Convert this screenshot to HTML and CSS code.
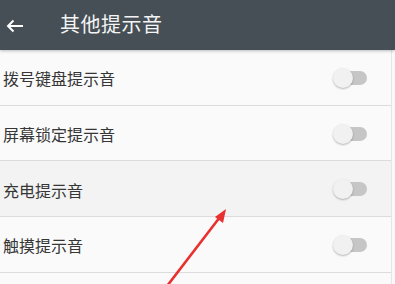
FILE: index.html
```html
<!DOCTYPE html>
<html lang="zh">
<head>
<meta charset="utf-8">
<link rel="stylesheet" href="styles.css">
</head>
<body>
<div class="screen">
  <header class="toolbar">
    <svg class="back" width="18" height="14" viewBox="0 0 18 14"><path d="M17 7H2M7.5 1.5L2 7l5.5 5.5" fill="none" stroke="#fff" stroke-width="2"/></svg>
    <span class="title">其他提示音</span>
  </header>
  <ul class="list">
    <li class="row"><span class="label">拨号键盘提示音</span><span class="switch"><span class="track"></span><span class="knob"></span></span></li>
    <li class="row"><span class="label">屏幕锁定提示音</span><span class="switch"><span class="track"></span><span class="knob"></span></span></li>
    <li class="row pressed"><span class="label">充电提示音</span><span class="switch"><span class="track"></span><span class="knob"></span></span></li>
    <li class="row"><span class="label">触摸提示音</span><span class="switch"><span class="track"></span><span class="knob"></span></span></li>
    <li class="row"></li>
  </ul>
  <svg class="arrow" width="395" height="284" viewBox="0 0 395 284">
    <line x1="164" y1="290" x2="220" y2="217" stroke="#e8302e" stroke-width="2.6" stroke-linecap="round"/>
    <polygon points="226,209 215,217 223,223" fill="#e8302e"/>
  </svg>
</div>
</body>
</html>
```

FILE: styles.css
```css
* { box-sizing: border-box; }
html, body { margin: 0; padding: 0; }
body {
  width: 395px;
  height: 284px;
  overflow: hidden;
  background: #fafafa;
  font-family: "Noto Sans CJK SC", "Noto Sans", sans-serif;
}
.screen {
  position: relative;
  width: 395px;
  height: 284px;
  overflow: hidden;
}
.toolbar {
  height: 50px;
  background: #454f55;
  display: flex;
  align-items: center;
  padding-left: 6px;
  box-shadow: 0 1px 3px rgba(0,0,0,0.25);
  position: relative;
  z-index: 1;
}
.back { display: block; margin-top: 1px; }
.title {
  color: #f4f4f4;
  font-size: 20px;
  margin-left: 36px;
  letter-spacing: 0.5px;
  line-height: 1;
  margin-top: -2px;
}
.list {
  list-style: none;
  margin: 0;
  padding: 0;
  width: 392px;
  border-right: 1px solid #e6e6e6;
}
.row {
  height: 55.7px;
  display: flex;
  align-items: center;
  justify-content: space-between;
  border-bottom: 1px solid #dcdcdc;
  box-shadow: 0 1px 0 #f0f0f0;
  background: #fafafa;
  padding-left: 3px;
  padding-right: 23px;
}
.row.pressed { background: #f3f3f3; }
.label {
  font-size: 16px;
  color: #363636;
  margin-top: 2px;
}
.switch {
  position: relative;
  width: 35px;
  height: 20px;
  margin-top: 1px;
}
.track {
  position: absolute;
  left: 10px;
  top: 3px;
  width: 24px;
  height: 14px;
  border-radius: 7px;
  background: #c6c6c6;
}
.knob {
  position: absolute;
  left: 0;
  top: 0;
  width: 20px;
  height: 20px;
  border-radius: 50%;
  background: #f1f1f1;
  box-shadow: 0 1px 2px rgba(0,0,0,0.28);
}
.arrow {
  position: absolute;
  left: 0;
  top: 0;
  pointer-events: none;
}
```
